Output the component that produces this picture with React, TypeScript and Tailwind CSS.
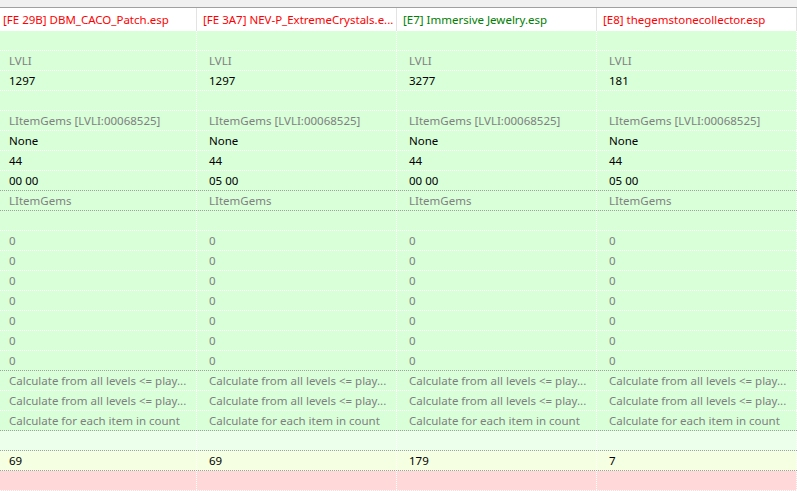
type Tone = "gray" | "black";

type Row = {
  bg: string;
  line: "white" | "gray";
  tone?: Tone;
  cells?: string[];
};

const headers = [
  { text: "[FE 29B] DBM_CACO_Patch.esp", color: "text-[#ff0000]" },
  { text: "[FE 3A7] NEV-P_ExtremeCrystals.e...", color: "text-[#ff0000]" },
  { text: "[E7] Immersive Jewelry.esp", color: "text-[#008000]" },
  { text: "[E8] thegemstonecollector.esp", color: "text-[#ff0000]" },
];

const calcAll = "Calculate from all levels <= play...";
const zeros: Row = { bg: "green", line: "white", tone: "gray", cells: ["0", "0", "0", "0"] };

const rows: Row[] = [
  { bg: "green", line: "white" },
  { bg: "green", line: "white", tone: "gray", cells: ["LVLI", "LVLI", "LVLI", "LVLI"] },
  { bg: "green", line: "white", tone: "black", cells: ["1297", "1297", "3277", "181"] },
  { bg: "green", line: "white" },
  {
    bg: "green",
    line: "white",
    tone: "gray",
    cells: Array(4).fill("LItemGems [LVLI:00068525]"),
  },
  { bg: "green", line: "white", tone: "black", cells: ["None", "None", "None", "None"] },
  { bg: "green", line: "white", tone: "black", cells: ["44", "44", "44", "44"] },
  { bg: "green", line: "gray", tone: "black", cells: ["00 00", "05 00", "00 00", "05 00"] },
  { bg: "green", line: "gray", tone: "gray", cells: Array(4).fill("LItemGems") },
  { bg: "green", line: "white" },
  zeros,
  zeros,
  zeros,
  zeros,
  zeros,
  zeros,
  { ...zeros, line: "gray" },
  { bg: "green", line: "white", tone: "gray", cells: Array(4).fill(calcAll) },
  { bg: "green", line: "white", tone: "gray", cells: Array(4).fill(calcAll) },
  {
    bg: "green",
    line: "gray",
    tone: "gray",
    cells: Array(4).fill("Calculate for each item in count"),
  },
  { bg: "pale", line: "gray" },
  { bg: "yellow", line: "gray", tone: "black", cells: ["69", "69", "179", "7"] },
  { bg: "pink", line: "white" },
];

const bgClass: Record<string, string> = {
  green: "bg-[#d9ffd9]",
  pale: "bg-[#ebffeb]",
  yellow: "bg-[#f5ffe1]",
  pink: "bg-[#ffd9d9]",
};

export default function App() {
  return (
    <div
      className="w-[797px] h-[491px] overflow-hidden bg-white text-[11.5px] leading-none"
      style={{ fontFamily: '"Segoe UI", "Noto Sans", "Open Sans", sans-serif' }}
    >
      <div className="h-[7px] bg-[#f0f0f0]" />
      <div className="h-px bg-[#a0a0a0]" />
      <div className="-ml-[3px] flex flex-col">
        <div className="flex h-[23px] bg-white">
          {headers.map((h) => (
            <div
              key={h.text}
              className={`w-[200px] shrink-0 flex items-center pl-[6px] whitespace-nowrap overflow-hidden border-r border-[#e3e3e3] ${h.color}`}
            >
              {h.text}
            </div>
          ))}
        </div>
        {rows.map((row, i) => (
          <div
            key={i}
            className={`flex h-[20px] border-b border-dotted ${
              row.line === "gray" ? "border-[#a0a0a0]" : "border-white"
            } ${bgClass[row.bg]}`}
          >
            {[0, 1, 2, 3].map((c) => (
              <div
                key={c}
                className={`w-[200px] shrink-0 flex items-center pl-[12px] whitespace-nowrap overflow-hidden border-r border-dotted border-white ${
                  row.tone === "black" ? "text-black" : "text-[#808080]"
                }`}
              >
                {row.cells ? row.cells[c] : ""}
              </div>
            ))}
          </div>
        ))}
      </div>
    </div>
  );
}
